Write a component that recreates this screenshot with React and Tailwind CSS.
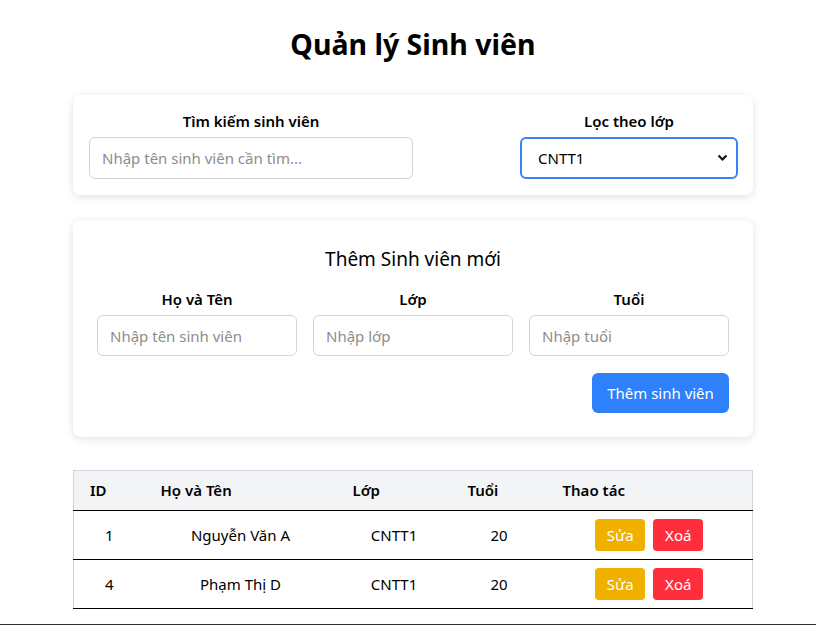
import React, { useState } from 'react';

const STUDENTS = [
  { id: 1, name: 'Nguyễn Văn A', lop: 'CNTT1', age: 20 },
  { id: 4, name: 'Phạm Thị D', lop: 'CNTT1', age: 20 },
];

const inputCls =
  'w-full h-[41px] px-3 rounded-md border border-[#d1d5db] bg-white text-[15px] text-[#111] placeholder:text-[#8c8c8c] outline-none';

export default function App() {
  const [search, setSearch] = useState('');
  const [filter, setFilter] = useState('CNTT1');

  return (
    <div className="min-h-screen bg-white text-black font-['Noto_Sans',sans-serif]">
      <div className="flex justify-center pl-[10px]">
        <div className="w-[680px] pt-[24px]">
          <h1 className="text-[28.5px] font-bold text-center leading-[40px]">Quản lý Sinh viên</h1>

          {/* Search + filter */}
          <div className="mt-[31px] flex justify-between items-end rounded-lg bg-white shadow-[0_2px_8px_rgba(0,0,0,0.12)] pl-4 pr-[15px] py-4">
            <div className="w-[324px] flex flex-col items-center">
              <label className="text-[15px] font-semibold leading-5 mb-[6px]">Tìm kiếm sinh viên</label>
              <input
                value={search}
                onChange={(e) => setSearch(e.target.value)}
                placeholder="Nhập tên sinh viên cần tìm..."
                className={inputCls + ' h-[42px]'}
              />
            </div>
            <div className="w-[218px] flex flex-col items-center">
              <label className="text-[15px] font-semibold leading-5 mb-[6px]">Lọc theo lớp</label>
              <div className="relative w-full">
                <select
                  value={filter}
                  onChange={(e) => setFilter(e.target.value)}
                  className="w-full h-[42px] appearance-none rounded-md border-2 border-[#3b82f6] bg-white pl-4 text-[15px] outline-none"
                >
                  <option>Tất cả</option>
                  <option>CNTT1</option>
                  <option>CNTT2</option>
                </select>
                <svg className="absolute right-[10px] top-1/2 -translate-y-1/2 pointer-events-none" width="11" height="8" viewBox="0 0 11 8">
                  <path d="M1.5 1.5 L5.5 5.5 L9.5 1.5" stroke="#111" strokeWidth="2.2" fill="none" />
                </svg>
              </div>
            </div>
          </div>

          {/* Add form */}
          <div className="mt-[25px] rounded-lg bg-white shadow-[0_2px_8px_rgba(0,0,0,0.12)] px-6 pt-6 pb-6">
            <h2 className="text-[19px] text-center leading-[30px]">Thêm Sinh viên mới</h2>
            <div className="mt-[15px] grid grid-cols-3 gap-4">
              {[
                ['Họ và Tên', 'Nhập tên sinh viên'],
                ['Lớp', 'Nhập lớp'],
                ['Tuổi', 'Nhập tuổi'],
              ].map(([label, ph]) => (
                <div key={label} className="flex flex-col items-center">
                  <label className="text-[15px] font-semibold leading-5 mb-[6px]">{label}</label>
                  <input placeholder={ph} className={inputCls} />
                </div>
              ))}
            </div>
            <div className="mt-[17px] flex justify-end">
              <button className="h-10 w-[137px] rounded-md bg-[#2f80fb] text-white text-[15px]">Thêm sinh viên</button>
            </div>
          </div>

          {/* Table */}
          <table className="mt-[33px] w-full border-collapse border border-[#d1d5db] text-[15px]">
            <thead>
              <tr className="bg-[#f3f4f6] h-10 border-b border-black">
                <th className="w-[71px] text-left font-semibold pl-4">ID</th>
                <th className="w-[192px] text-left font-semibold pl-4">Họ và Tên</th>
                <th className="w-[115px] text-left font-semibold pl-4">Lớp</th>
                <th className="w-[95px] text-left font-semibold pl-4">Tuổi</th>
                <th className="text-left font-semibold pl-4">Thao tác</th>
              </tr>
            </thead>
            <tbody>
              {STUDENTS.map((s) => (
                <tr key={s.id} className="h-[49px] border-b border-black">
                  <td className="text-center">{s.id}</td>
                  <td className="text-center">{s.name}</td>
                  <td className="text-center">{s.lop}</td>
                  <td className="text-center">{s.age}</td>
                  <td>
                    <div className="flex justify-center gap-2">
                      <button className="h-8 w-[50px] rounded bg-[#f0b000] text-white">Sửa</button>
                      <button className="h-8 w-[50px] rounded bg-[#fe2e3d] text-white">Xoá</button>
                    </div>
                  </td>
                </tr>
              ))}
            </tbody>
          </table>
        </div>
      </div>
      <div className="mt-[15px] h-16 bg-[#2b333b]" />
    </div>
  );
}
